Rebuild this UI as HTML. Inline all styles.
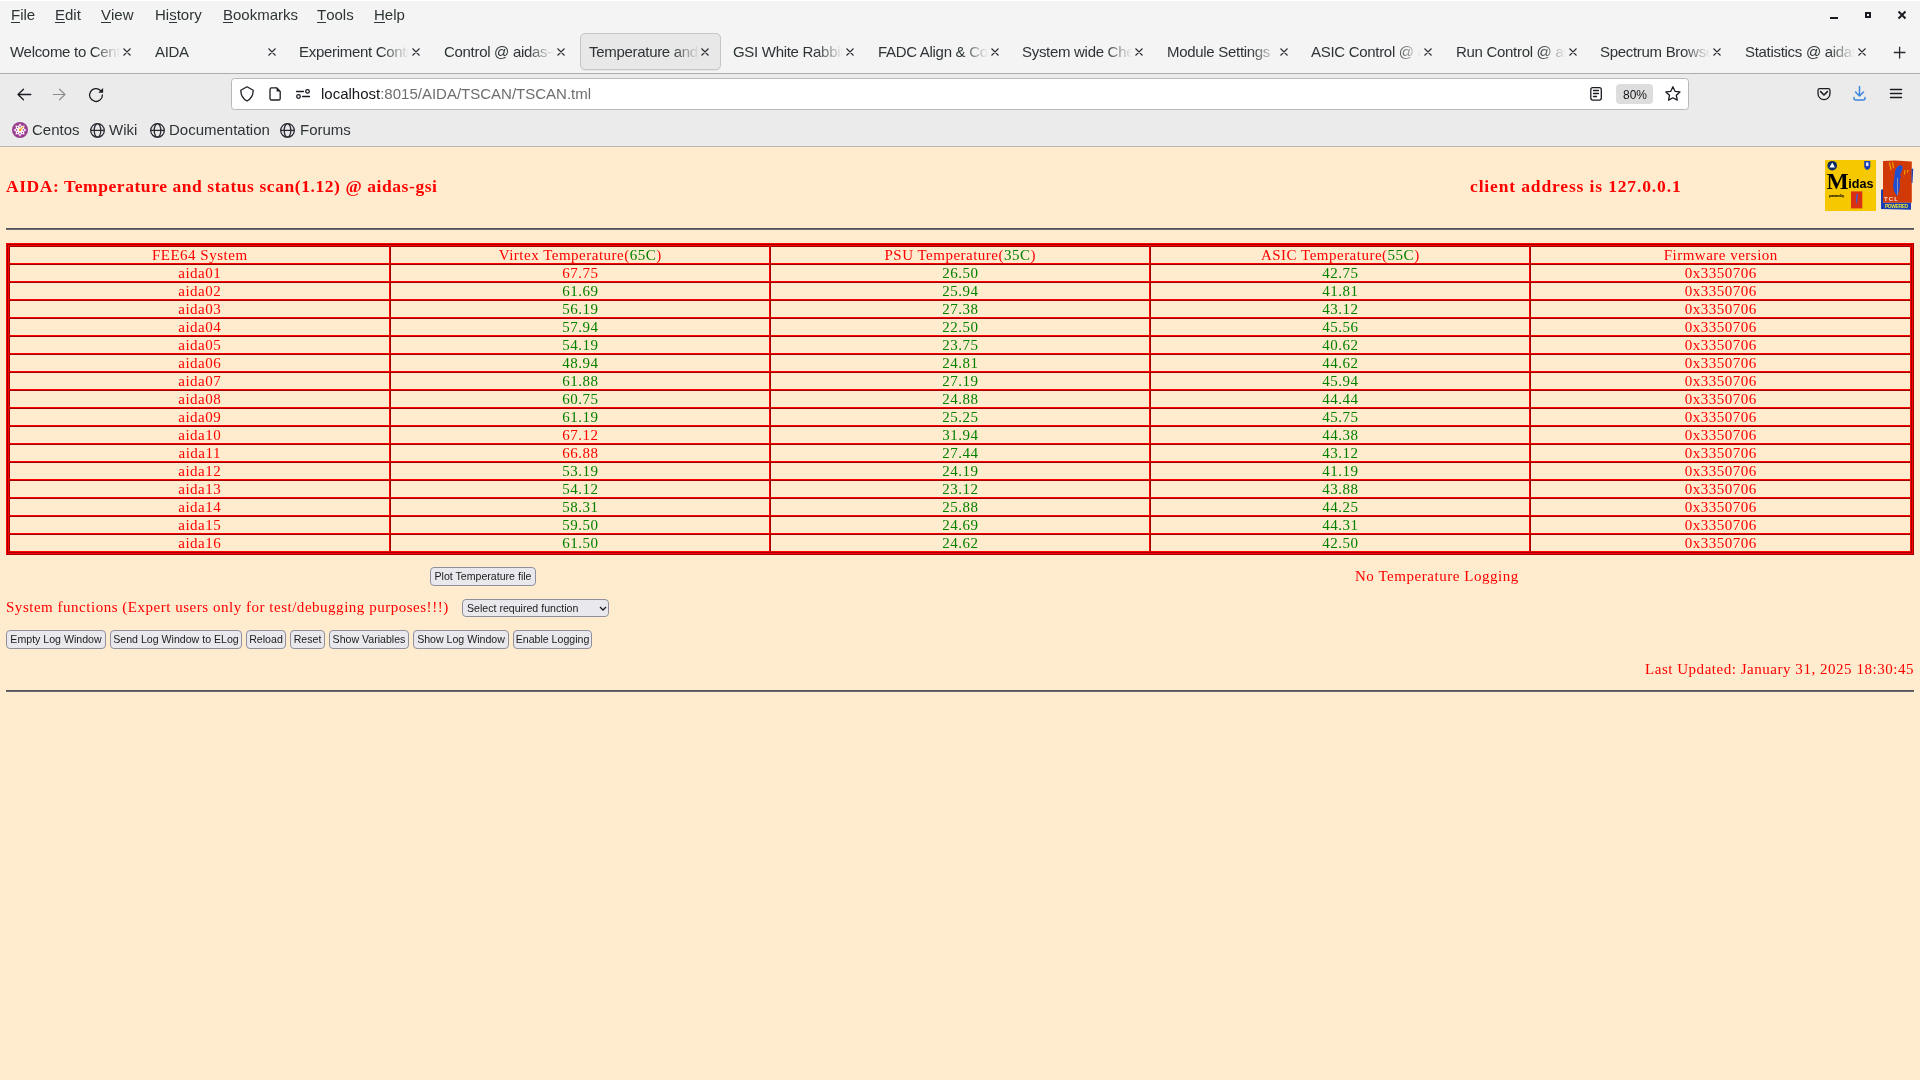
<!DOCTYPE html>
<html><head><meta charset="utf-8"><title>TSCAN</title>
<style>
*{box-sizing:border-box}
html,body{margin:0;padding:0;width:1920px;height:1080px;overflow:hidden;background:#ffebcd;}
#root{position:absolute;left:0;top:0;width:1920px;height:1080px;will-change:transform;font-family:"Liberation Sans",sans-serif;}
.a{position:absolute}
#top{position:absolute;left:0;top:0;width:1920px;height:73px;background:#f4f4f4;border-top:1px solid #fff}
#l1{position:absolute;left:0;top:73px;width:1920px;height:1px;background:#adadad}
#nav{position:absolute;left:0;top:74px;width:1920px;height:72px;background:#ebebeb}
#l2{position:absolute;left:0;top:146px;width:1920px;height:1px;background:#b8b7b2}
.menu{position:absolute;top:6px;font-size:15px;color:#2e3436;line-height:18px;white-space:nowrap}
.menu u{text-decoration:none;position:relative}
.menu u:after{content:"";position:absolute;left:0;right:0;top:16px;height:1px;background:#2e3436}
.tab{position:absolute;top:33px;width:141px;height:37px;}
.tab.act{background:#e8e8e8;border:1px solid #c5c5c9;border-radius:5px;box-shadow:0 1px 1px rgba(0,0,0,.06)}
.tt{position:absolute;top:43px;width:110px;white-space:nowrap;overflow:hidden;font-size:15px;letter-spacing:-0.3px;color:#2e3436;line-height:18px;
  -webkit-mask-image:linear-gradient(to right,#000 84px,rgba(0,0,0,0) 110px)}
#url{position:absolute;left:231px;top:78px;width:1458px;height:32px;background:#fff;border:1px solid #b8b9b4;border-radius:3.5px}
.bm{position:absolute;top:121px;font-size:15px;color:#2e3436;line-height:18px;white-space:nowrap}
.c{position:absolute;height:18px;text-align:center;font-family:"Liberation Serif",serif;font-size:15px;letter-spacing:0.5px;text-indent:0.5px;line-height:18px;white-space:nowrap;color:#ff0000}
.g{color:#008000}
.gc{position:absolute;height:18px;border-style:solid;border-width:1px;border-color:#a30000 #ff0000 #ff0000 #a30000}
.ser{font-family:"Liberation Serif",serif;color:#ff0000;white-space:nowrap}
.btn{position:absolute;height:19px;background:#e9e9ed;border:1px solid #8f8f9d;border-radius:4px;font-size:10.6px;line-height:17px;color:#1b1b1b;text-align:center;white-space:nowrap}
</style></head><body><div id="root">
<div id="top"></div>
<div id="l1"></div>
<div id="nav"></div>
<div id="l2"></div>
<div class="menu" style="left:11px"><u>F</u>ile</div>
<div class="menu" style="left:55px"><u>E</u>dit</div>
<div class="menu" style="left:101px"><u>V</u>iew</div>
<div class="menu" style="left:155px">Hi<u>s</u>tory</div>
<div class="menu" style="left:223px"><u>B</u>ookmarks</div>
<div class="menu" style="left:317px"><u>T</u>ools</div>
<div class="menu" style="left:374px"><u>H</u>elp</div>
<div class="tab" style="left:1px"></div><div class="tt" style="left:10px">Welcome to CentOS</div>
<div class="tab" style="left:146px"></div><div class="tt" style="left:155px">AIDA</div>
<div class="tab" style="left:290px"></div><div class="tt" style="left:299px">Experiment Control</div>
<div class="tab" style="left:435px"></div><div class="tt" style="left:444px">Control @ aidas-gsi</div>
<div class="tab act" style="left:580px"></div><div class="tt" style="left:589px">Temperature and status</div>
<div class="tab" style="left:724px"></div><div class="tt" style="left:733px">GSI White Rabbit</div>
<div class="tab" style="left:869px"></div><div class="tt" style="left:878px">FADC Align &amp; Control</div>
<div class="tab" style="left:1013px"></div><div class="tt" style="left:1022px">System wide Checks</div>
<div class="tab" style="left:1158px"></div><div class="tt" style="left:1167px">Module Settings</div>
<div class="tab" style="left:1302px"></div><div class="tt" style="left:1311px">ASIC Control @ aidas</div>
<div class="tab" style="left:1447px"></div><div class="tt" style="left:1456px">Run Control @ aidas</div>
<div class="tab" style="left:1591px"></div><div class="tt" style="left:1600px">Spectrum Browser</div>
<div class="tab" style="left:1736px"></div><div class="tt" style="left:1745px">Statistics @ aidas</div>
<div id="url"></div>
<div class="a" style="left:321px;top:85px;font-size:15px;line-height:18px;color:#15141a;white-space:nowrap">localhost<span style="color:#6d6d6d">:8015/AIDA/TSCAN/TSCAN.tml</span></div>
<div class="a" style="left:1616px;top:84px;width:37px;height:20px;background:#dddddd;border-radius:4px"></div>
<div class="a" style="left:1623px;top:87px;font-size:12px;line-height:16px;color:#15141a">80%</div>
<div class="bm" style="left:32px">Centos</div>
<div class="bm" style="left:109px">Wiki</div>
<div class="bm" style="left:169px">Documentation</div>
<div class="bm" style="left:300px">Forums</div>
<svg class="a" style="left:0;top:0" width="1920" height="147" viewBox="0 0 1920 147">
<g fill="none" stroke="#1c1b22" stroke-width="2">
 <path d="M1830 18H1838"/>
 <rect x="1866" y="13" width="4" height="4"/>
 <path d="M1898.5 11.5L1905.5 18.5M1905.5 11.5L1898.5 18.5"/>
</g>
<path d="M123.5 48.5L130.5 55.5M130.5 48.5L123.5 55.5 M268.5 48.5L275.5 55.5M275.5 48.5L268.5 55.5 M412.5 48.5L419.5 55.5M419.5 48.5L412.5 55.5 M557.5 48.5L564.5 55.5M564.5 48.5L557.5 55.5 M701.5 48.5L708.5 55.5M708.5 48.5L701.5 55.5 M846.5 48.5L853.5 55.5M853.5 48.5L846.5 55.5 M991.5 48.5L998.5 55.5M998.5 48.5L991.5 55.5 M1135.5 48.5L1142.5 55.5M1142.5 48.5L1135.5 55.5 M1280.5 48.5L1287.5 55.5M1287.5 48.5L1280.5 55.5 M1424.5 48.5L1431.5 55.5M1431.5 48.5L1424.5 55.5 M1569.5 48.5L1576.5 55.5M1576.5 48.5L1569.5 55.5 M1713.5 48.5L1720.5 55.5M1720.5 48.5L1713.5 55.5 M1858.5 48.5L1865.5 55.5M1865.5 48.5L1858.5 55.5" fill="none" stroke="#2b2a33" stroke-width="1.1"/>
<path d="M1899.6 46.8V58.4M1893.8 52.5H1905.4" fill="none" stroke="#2b2a33" stroke-width="1.3"/>
<g fill="none" stroke="#1c1b22" stroke-width="1.3" stroke-linecap="round" stroke-linejoin="round">
 <path d="M23.5 89.2L18 94.5L23.5 99.8M18 94.5H30.8"/>
 <path d="M102.4 95A6.4 6.4 0 1 1 100.5 90.5"/>
 <path d="M247 86.8L253.2 90.2C253.2 95.5 251 98.8 247 101C243 98.8 240.8 95.5 240.8 90.2Z"/>
 <path d="M271.6 87.8H276.6L280.2 91.4V98.4A1.6 1.6 0 0 1 278.6 100H271.6A1.6 1.6 0 0 1 270 98.4V89.4A1.6 1.6 0 0 1 271.6 87.8Z"/>
 <path d="M296.5 91.5H303.5M302.5 96.5H309.5"/>
 <circle cx="307.5" cy="91.4" r="1.8"/><circle cx="298.5" cy="96.5" r="1.8"/>
 <rect x="1590.8" y="87.7" width="10.5" height="12.4" rx="2"/>
 <path d="M1593.5 90.5H1598.5M1593.5 93.5H1598.5M1593.5 96.5H1596.5"/>
 <path d="M1672.90 86.80 L1675.02 91.29 L1679.94 91.91 L1676.32 95.31 L1677.25 100.19 L1672.90 97.80 L1668.55 100.19 L1669.48 95.31 L1665.86 91.91 L1670.78 91.29Z"/>
 <path d="M1818 90.5A1.8 1.8 0 0 1 1819.8 88.7H1828.2A1.8 1.8 0 0 1 1830 90.5V93.6A6 6 0 0 1 1818 93.6Z"/>
 <path d="M1820.6 91.6L1824 95L1827.4 91.6" stroke-width="1.5"/>
 <path d="M1890.5 89.6H1901.5M1890.5 93.6H1901.5M1890.5 97.6H1901.5" stroke-width="1.5"/>
</g>
<path d="M59.5 89.2L65 94.5L59.5 99.8M65 94.5H53.2" fill="none" stroke="#8e8e92" stroke-width="1.2" stroke-linecap="round" stroke-linejoin="round"/>
<path d="M98.3 92.8H103.1V88Z" fill="#1c1b22"/>
<path d="M276.6 87.8V91.4H280.2Z" fill="#1c1b22"/>
<g fill="none" stroke="#3a86de" stroke-width="1.5" stroke-linecap="round" stroke-linejoin="round">
 <path d="M1859.5 86.5V96M1855.5 92L1859.5 96L1863.5 92"/>
 <path d="M1854 97.5V98.5A1.5 1.5 0 0 0 1855.5 100H1863.5A1.5 1.5 0 0 0 1865 98.5V97.5"/>
</g>
<circle cx="20" cy="130" r="8" fill="#9b3d91"/>
<g fill="#fff"><path d="M20 123.6L21.7 126L24.5 125.5L24 128.3L26.4 130L24 131.7L24.5 134.5L21.7 134L20 136.4L18.3 134L15.5 134.5L16 131.7L13.6 130L16 128.3L15.5 125.5L18.3 126Z"/></g>
<circle cx="20" cy="130" r="1.3" fill="#f0a020"/>
<g fill="#b25aa8"><circle cx="20" cy="126.5" r="0.9"/><circle cx="20" cy="133.5" r="0.9"/><circle cx="16.5" cy="130" r="0.9"/><circle cx="23.5" cy="130" r="0.9"/></g><g fill="#9b3d91"><circle cx="17.5" cy="127.5" r="0.7"/><circle cx="17.5" cy="132.5" r="0.7"/><circle cx="22.5" cy="132.5" r="0.7"/></g><path d="M20.5 129.5L23.3 126.5" stroke="#f0a020" stroke-width="1.1"/>
<g fill="none" stroke="#2b2a33" stroke-width="1.3">
 <circle cx="97.5" cy="130.4" r="6.8"/><ellipse cx="97.5" cy="130.4" rx="3.3" ry="6.8"/><path d="M90.7 130.4H104.3"/>
 <circle cx="157.5" cy="130.4" r="6.8"/><ellipse cx="157.5" cy="130.4" rx="3.3" ry="6.8"/><path d="M150.7 130.4H164.3"/>
 <circle cx="287.5" cy="130.4" r="6.8"/><ellipse cx="287.5" cy="130.4" rx="3.3" ry="6.8"/><path d="M280.7 130.4H294.3"/>
</g>
</svg>
<div class="a ser" style="left:6px;top:176px;font-size:17.5px;letter-spacing:0.57px;font-weight:bold;line-height:20px">AIDA: Temperature and status scan(1.12) @ aidas-gsi</div>
<div class="a ser" style="left:1470px;top:176px;font-size:17.5px;letter-spacing:0.86px;font-weight:bold;line-height:20px">client address is 127.0.0.1</div>
<svg class="a" style="left:1820px;top:155px" width="100" height="60" viewBox="1820 155 100 60">
<rect x="1825" y="160" width="51" height="51" fill="#f5c800"/>
<circle cx="1832.2" cy="165.7" r="4.8" fill="#0c2a66"/>
<path d="M1832.2 162.6L1835 167.6H1829.4Z" fill="#fff"/>
<path d="M1864.2 161H1870.3V166.5C1870.3 168 1868.8 169.5 1867.25 170C1865.7 169.5 1864.2 168 1864.2 166.5Z" fill="#1d3fb0"/>
<path d="M1866 162.5H1868.5V166H1866Z" fill="#dfe6ff"/>
<text x="1826.6" y="188.8" font-family="Liberation Serif" font-weight="bold" font-size="23.5" fill="#000">M</text>
<text x="1848.3" y="188.2" font-family="Liberation Sans" font-weight="bold" font-size="12.6" fill="#000">idas</text>
<text x="1829" y="197" font-family="Liberation Sans" font-weight="bold" font-size="3.6" fill="#000" textLength="15.3">powered by</text>
<rect x="1851" y="191.4" width="11.3" height="17" fill="#d83010"/>
<path d="M1856.5 194C1858 193.5 1858.5 195 1857.5 197L1857 205L1855.8 200Z" fill="#3b5ee0"/>
<path d="M1883 161.1L1895 160.5L1911.8 161.5L1911.8 202.8L1883 202.8Z" fill="#d13a06"/>
<path d="M1881 190L1883 189V202.8H1911V209.8L1881 209Z" fill="#1a3fb5"/>
<path d="M1911.5 169L1913.2 168.5L1912.5 183L1911.5 183Z" fill="#1a3fb5"/>
<path d="M1901.5 165.3C1899 165 1896 167 1895 171L1894 180L1893 186L1894 191L1897 196.5L1899 191L1900 186L1899.5 181L1901 176L1899.8 175L1902 170.5C1903 167.5 1902.5 165.6 1901.5 165.3Z" fill="#1f4fd0"/>
<path d="M1897.5 178V195" stroke="#f0d0c0" stroke-width="0.5"/>
<path d="M1889.5 162.5L1891 170M1892.5 162L1893.5 168" stroke="#f5b000" stroke-width="1"/>
<path d="M1905 170L1904.5 174.5M1908 170L1907.5 172.5" stroke="#f5b000" stroke-width="1"/>
<text x="1884" y="201" font-family="Liberation Sans" font-weight="bold" font-size="6" fill="#f3e0d6" textLength="14">TCL</text>
<text x="1885" y="208.3" font-family="Liberation Sans" font-weight="bold" font-size="5" fill="#e8e030" textLength="23">POWERED</text>
</svg>
<div class="a" style="left:6px;top:228px;width:1908px;height:1px;background:#50535a"></div>
<div class="a" style="left:6px;top:229px;width:1908px;height:1px;background:#686b70"></div>
<div class="a" style="left:6px;top:243px;width:1908px;height:312px;border-style:solid;border-width:1px;border-color:#ff0000 #a30000 #a30000 #ff0000"></div>
<div class="a" style="left:7px;top:244px;width:1906px;height:310px;border-style:solid;border-width:1px;border-color:#a30000 #ff0000 #ff0000 #a30000"></div>
<div class="a" style="left:8px;top:245px;width:1904px;height:308px;border-style:solid;border-width:1px;border-color:#ff0000 #a30000 #a30000 #ff0000"></div>
<div class="gc" style="left:9px;top:246px;width:381px"></div>
<div class="gc" style="left:390px;top:246px;width:380px"></div>
<div class="gc" style="left:770px;top:246px;width:380px"></div>
<div class="gc" style="left:1150px;top:246px;width:380px"></div>
<div class="gc" style="left:1530px;top:246px;width:381px"></div>
<div class="gc" style="left:9px;top:264px;width:381px"></div>
<div class="gc" style="left:390px;top:264px;width:380px"></div>
<div class="gc" style="left:770px;top:264px;width:380px"></div>
<div class="gc" style="left:1150px;top:264px;width:380px"></div>
<div class="gc" style="left:1530px;top:264px;width:381px"></div>
<div class="gc" style="left:9px;top:282px;width:381px"></div>
<div class="gc" style="left:390px;top:282px;width:380px"></div>
<div class="gc" style="left:770px;top:282px;width:380px"></div>
<div class="gc" style="left:1150px;top:282px;width:380px"></div>
<div class="gc" style="left:1530px;top:282px;width:381px"></div>
<div class="gc" style="left:9px;top:300px;width:381px"></div>
<div class="gc" style="left:390px;top:300px;width:380px"></div>
<div class="gc" style="left:770px;top:300px;width:380px"></div>
<div class="gc" style="left:1150px;top:300px;width:380px"></div>
<div class="gc" style="left:1530px;top:300px;width:381px"></div>
<div class="gc" style="left:9px;top:318px;width:381px"></div>
<div class="gc" style="left:390px;top:318px;width:380px"></div>
<div class="gc" style="left:770px;top:318px;width:380px"></div>
<div class="gc" style="left:1150px;top:318px;width:380px"></div>
<div class="gc" style="left:1530px;top:318px;width:381px"></div>
<div class="gc" style="left:9px;top:336px;width:381px"></div>
<div class="gc" style="left:390px;top:336px;width:380px"></div>
<div class="gc" style="left:770px;top:336px;width:380px"></div>
<div class="gc" style="left:1150px;top:336px;width:380px"></div>
<div class="gc" style="left:1530px;top:336px;width:381px"></div>
<div class="gc" style="left:9px;top:354px;width:381px"></div>
<div class="gc" style="left:390px;top:354px;width:380px"></div>
<div class="gc" style="left:770px;top:354px;width:380px"></div>
<div class="gc" style="left:1150px;top:354px;width:380px"></div>
<div class="gc" style="left:1530px;top:354px;width:381px"></div>
<div class="gc" style="left:9px;top:372px;width:381px"></div>
<div class="gc" style="left:390px;top:372px;width:380px"></div>
<div class="gc" style="left:770px;top:372px;width:380px"></div>
<div class="gc" style="left:1150px;top:372px;width:380px"></div>
<div class="gc" style="left:1530px;top:372px;width:381px"></div>
<div class="gc" style="left:9px;top:390px;width:381px"></div>
<div class="gc" style="left:390px;top:390px;width:380px"></div>
<div class="gc" style="left:770px;top:390px;width:380px"></div>
<div class="gc" style="left:1150px;top:390px;width:380px"></div>
<div class="gc" style="left:1530px;top:390px;width:381px"></div>
<div class="gc" style="left:9px;top:408px;width:381px"></div>
<div class="gc" style="left:390px;top:408px;width:380px"></div>
<div class="gc" style="left:770px;top:408px;width:380px"></div>
<div class="gc" style="left:1150px;top:408px;width:380px"></div>
<div class="gc" style="left:1530px;top:408px;width:381px"></div>
<div class="gc" style="left:9px;top:426px;width:381px"></div>
<div class="gc" style="left:390px;top:426px;width:380px"></div>
<div class="gc" style="left:770px;top:426px;width:380px"></div>
<div class="gc" style="left:1150px;top:426px;width:380px"></div>
<div class="gc" style="left:1530px;top:426px;width:381px"></div>
<div class="gc" style="left:9px;top:444px;width:381px"></div>
<div class="gc" style="left:390px;top:444px;width:380px"></div>
<div class="gc" style="left:770px;top:444px;width:380px"></div>
<div class="gc" style="left:1150px;top:444px;width:380px"></div>
<div class="gc" style="left:1530px;top:444px;width:381px"></div>
<div class="gc" style="left:9px;top:462px;width:381px"></div>
<div class="gc" style="left:390px;top:462px;width:380px"></div>
<div class="gc" style="left:770px;top:462px;width:380px"></div>
<div class="gc" style="left:1150px;top:462px;width:380px"></div>
<div class="gc" style="left:1530px;top:462px;width:381px"></div>
<div class="gc" style="left:9px;top:480px;width:381px"></div>
<div class="gc" style="left:390px;top:480px;width:380px"></div>
<div class="gc" style="left:770px;top:480px;width:380px"></div>
<div class="gc" style="left:1150px;top:480px;width:380px"></div>
<div class="gc" style="left:1530px;top:480px;width:381px"></div>
<div class="gc" style="left:9px;top:498px;width:381px"></div>
<div class="gc" style="left:390px;top:498px;width:380px"></div>
<div class="gc" style="left:770px;top:498px;width:380px"></div>
<div class="gc" style="left:1150px;top:498px;width:380px"></div>
<div class="gc" style="left:1530px;top:498px;width:381px"></div>
<div class="gc" style="left:9px;top:516px;width:381px"></div>
<div class="gc" style="left:390px;top:516px;width:380px"></div>
<div class="gc" style="left:770px;top:516px;width:380px"></div>
<div class="gc" style="left:1150px;top:516px;width:380px"></div>
<div class="gc" style="left:1530px;top:516px;width:381px"></div>
<div class="gc" style="left:9px;top:534px;width:381px"></div>
<div class="gc" style="left:390px;top:534px;width:380px"></div>
<div class="gc" style="left:770px;top:534px;width:380px"></div>
<div class="gc" style="left:1150px;top:534px;width:380px"></div>
<div class="gc" style="left:1530px;top:534px;width:381px"></div>
<div class="c" style="left:9px;top:246px;width:381px">FEE64 System</div>
<div class="c" style="left:390px;top:246px;width:380px">Virtex Temperature(<span class="g">65C</span>)</div>
<div class="c" style="left:770px;top:246px;width:380px">PSU Temperature(<span class="g">35C</span>)</div>
<div class="c" style="left:1150px;top:246px;width:380px">ASIC Temperature(<span class="g">55C</span>)</div>
<div class="c" style="left:1530px;top:246px;width:381px">Firmware version</div>
<div class="c" style="left:9px;top:264px;width:381px">aida01</div>
<div class="c" style="left:390px;top:264px;width:380px">67.75</div>
<div class="c g" style="left:770px;top:264px;width:380px">26.50</div>
<div class="c g" style="left:1150px;top:264px;width:380px">42.75</div>
<div class="c" style="left:1530px;top:264px;width:381px">0x3350706</div>
<div class="c" style="left:9px;top:282px;width:381px">aida02</div>
<div class="c g" style="left:390px;top:282px;width:380px">61.69</div>
<div class="c g" style="left:770px;top:282px;width:380px">25.94</div>
<div class="c g" style="left:1150px;top:282px;width:380px">41.81</div>
<div class="c" style="left:1530px;top:282px;width:381px">0x3350706</div>
<div class="c" style="left:9px;top:300px;width:381px">aida03</div>
<div class="c g" style="left:390px;top:300px;width:380px">56.19</div>
<div class="c g" style="left:770px;top:300px;width:380px">27.38</div>
<div class="c g" style="left:1150px;top:300px;width:380px">43.12</div>
<div class="c" style="left:1530px;top:300px;width:381px">0x3350706</div>
<div class="c" style="left:9px;top:318px;width:381px">aida04</div>
<div class="c g" style="left:390px;top:318px;width:380px">57.94</div>
<div class="c g" style="left:770px;top:318px;width:380px">22.50</div>
<div class="c g" style="left:1150px;top:318px;width:380px">45.56</div>
<div class="c" style="left:1530px;top:318px;width:381px">0x3350706</div>
<div class="c" style="left:9px;top:336px;width:381px">aida05</div>
<div class="c g" style="left:390px;top:336px;width:380px">54.19</div>
<div class="c g" style="left:770px;top:336px;width:380px">23.75</div>
<div class="c g" style="left:1150px;top:336px;width:380px">40.62</div>
<div class="c" style="left:1530px;top:336px;width:381px">0x3350706</div>
<div class="c" style="left:9px;top:354px;width:381px">aida06</div>
<div class="c g" style="left:390px;top:354px;width:380px">48.94</div>
<div class="c g" style="left:770px;top:354px;width:380px">24.81</div>
<div class="c g" style="left:1150px;top:354px;width:380px">44.62</div>
<div class="c" style="left:1530px;top:354px;width:381px">0x3350706</div>
<div class="c" style="left:9px;top:372px;width:381px">aida07</div>
<div class="c g" style="left:390px;top:372px;width:380px">61.88</div>
<div class="c g" style="left:770px;top:372px;width:380px">27.19</div>
<div class="c g" style="left:1150px;top:372px;width:380px">45.94</div>
<div class="c" style="left:1530px;top:372px;width:381px">0x3350706</div>
<div class="c" style="left:9px;top:390px;width:381px">aida08</div>
<div class="c g" style="left:390px;top:390px;width:380px">60.75</div>
<div class="c g" style="left:770px;top:390px;width:380px">24.88</div>
<div class="c g" style="left:1150px;top:390px;width:380px">44.44</div>
<div class="c" style="left:1530px;top:390px;width:381px">0x3350706</div>
<div class="c" style="left:9px;top:408px;width:381px">aida09</div>
<div class="c g" style="left:390px;top:408px;width:380px">61.19</div>
<div class="c g" style="left:770px;top:408px;width:380px">25.25</div>
<div class="c g" style="left:1150px;top:408px;width:380px">45.75</div>
<div class="c" style="left:1530px;top:408px;width:381px">0x3350706</div>
<div class="c" style="left:9px;top:426px;width:381px">aida10</div>
<div class="c" style="left:390px;top:426px;width:380px">67.12</div>
<div class="c g" style="left:770px;top:426px;width:380px">31.94</div>
<div class="c g" style="left:1150px;top:426px;width:380px">44.38</div>
<div class="c" style="left:1530px;top:426px;width:381px">0x3350706</div>
<div class="c" style="left:9px;top:444px;width:381px">aida11</div>
<div class="c" style="left:390px;top:444px;width:380px">66.88</div>
<div class="c g" style="left:770px;top:444px;width:380px">27.44</div>
<div class="c g" style="left:1150px;top:444px;width:380px">43.12</div>
<div class="c" style="left:1530px;top:444px;width:381px">0x3350706</div>
<div class="c" style="left:9px;top:462px;width:381px">aida12</div>
<div class="c g" style="left:390px;top:462px;width:380px">53.19</div>
<div class="c g" style="left:770px;top:462px;width:380px">24.19</div>
<div class="c g" style="left:1150px;top:462px;width:380px">41.19</div>
<div class="c" style="left:1530px;top:462px;width:381px">0x3350706</div>
<div class="c" style="left:9px;top:480px;width:381px">aida13</div>
<div class="c g" style="left:390px;top:480px;width:380px">54.12</div>
<div class="c g" style="left:770px;top:480px;width:380px">23.12</div>
<div class="c g" style="left:1150px;top:480px;width:380px">43.88</div>
<div class="c" style="left:1530px;top:480px;width:381px">0x3350706</div>
<div class="c" style="left:9px;top:498px;width:381px">aida14</div>
<div class="c g" style="left:390px;top:498px;width:380px">58.31</div>
<div class="c g" style="left:770px;top:498px;width:380px">25.88</div>
<div class="c g" style="left:1150px;top:498px;width:380px">44.25</div>
<div class="c" style="left:1530px;top:498px;width:381px">0x3350706</div>
<div class="c" style="left:9px;top:516px;width:381px">aida15</div>
<div class="c g" style="left:390px;top:516px;width:380px">59.50</div>
<div class="c g" style="left:770px;top:516px;width:380px">24.69</div>
<div class="c g" style="left:1150px;top:516px;width:380px">44.31</div>
<div class="c" style="left:1530px;top:516px;width:381px">0x3350706</div>
<div class="c" style="left:9px;top:534px;width:381px">aida16</div>
<div class="c g" style="left:390px;top:534px;width:380px">61.50</div>
<div class="c g" style="left:770px;top:534px;width:380px">24.62</div>
<div class="c g" style="left:1150px;top:534px;width:380px">42.50</div>
<div class="c" style="left:1530px;top:534px;width:381px">0x3350706</div>
<div class="btn" style="left:430px;top:567px;width:106px">Plot Temperature file</div>
<div class="a ser" style="left:1355px;top:567px;font-size:15px;letter-spacing:0.54px;line-height:18px">No Temperature Logging</div>
<div class="a ser" style="left:6px;top:598px;font-size:15px;line-height:18px;letter-spacing:0.52px">System functions (Expert users only for test/debugging purposes!!!)</div>
<div class="btn" style="left:462px;top:599px;width:147px;height:18px;text-align:left;padding-left:4px;line-height:16px">Select required function<svg class="a" style="left:136px;top:6px" width="8" height="5" viewBox="0 0 8 5"><path d="M1 1L4 4L7 1" fill="none" stroke="#1b1b1b" stroke-width="1.3"/></svg></div>
<div class="btn" style="left:6px;top:630px;width:100px">Empty Log Window</div>
<div class="btn" style="left:110px;top:630px;width:132px">Send Log Window to ELog</div>
<div class="btn" style="left:246px;top:630px;width:40px">Reload</div>
<div class="btn" style="left:290px;top:630px;width:35px">Reset</div>
<div class="btn" style="left:329px;top:630px;width:80px">Show Variables</div>
<div class="btn" style="left:413px;top:630px;width:96px">Show Log Window</div>
<div class="btn" style="left:513px;top:630px;width:79px">Enable Logging</div>
<div class="a ser" style="left:1645px;top:660px;font-size:15px;line-height:18px;letter-spacing:0.53px">Last Updated: January 31, 2025 18:30:45</div>
<div class="a" style="left:6px;top:690px;width:1908px;height:1px;background:#50535a"></div>
<div class="a" style="left:6px;top:691px;width:1908px;height:1px;background:#686b70"></div>
</div></body></html>
